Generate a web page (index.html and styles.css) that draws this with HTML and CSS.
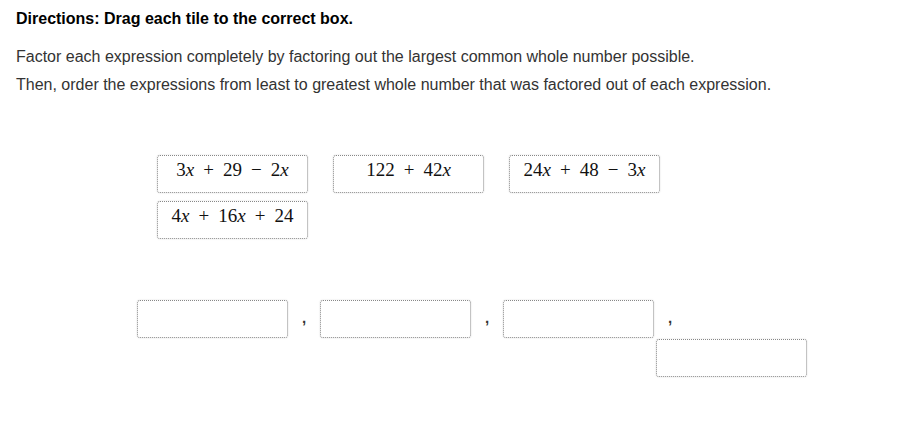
FILE: index.html
```html
<!DOCTYPE html>
<html>
<head>
<meta charset="utf-8">
<link rel="stylesheet" href="styles.css">
</head>
<body>
<div class="page">
  <p class="directions">Directions: Drag each tile to the correct box.</p>
  <p class="prompt">Factor each expression completely by factoring out the largest common whole number possible.<br>Then, order the expressions from least to greatest whole number that was factored out of each expression.</p>

  <div class="tiles">
    <div class="tile"><span class="math">3<i>x</i><span class="op">+</span>29<span class="op">−</span>2<i>x</i></span></div>
    <div class="tile"><span class="math">122<span class="op">+</span>42<i>x</i></span></div>
    <div class="tile"><span class="math">24<i>x</i><span class="op">+</span>48<span class="op">−</span>3<i>x</i></span></div>
    <div class="tile"><span class="math">4<i>x</i><span class="op">+</span>16<i>x</i><span class="op">+</span>24</span></div>
  </div>

  <div class="drops">
    <div class="drop-row">
      <div class="drop"></div><span class="comma">,</span>
      <div class="drop"></div><span class="comma">,</span>
      <div class="drop"></div><span class="comma">,</span>
    </div>
    <div class="drop-row second">
      <div class="drop"></div>
    </div>
  </div>
</div>
</body>
</html>
```
FILE: styles.css
```css
html, body {
  margin: 0;
  padding: 0;
  background: #ffffff;
}

.page {
  padding: 9px 16px;
  font-family: "Liberation Sans", Arial, sans-serif;
  color: #222;
}

.directions {
  margin: 0;
  font-size: 16px;
  line-height: 20px;
  font-weight: bold;
  color: #000;
}

.prompt {
  margin: 14px 0 0 0;
  font-size: 16px;
  line-height: 28px;
  color: #333;
}

.tiles {
  margin: 56px 0 0 141px;
  width: 503px;
  display: flex;
  flex-wrap: wrap;
  column-gap: 25px;
  row-gap: 8px;
}

.tile {
  box-sizing: border-box;
  width: 151px;
  height: 38px;
  padding-top: 3px;
  background: #fff;
  border: 1px dotted #888;
  border-radius: 3px;
  box-shadow: 0 0 2px #ddd;
  text-align: center;
  line-height: 22px;
}

.math {
  font-family: "Liberation Serif", "Times New Roman", serif;
  font-size: 19px;
  color: #111;
}

.math i {
  font-style: italic;
}

.op {
  margin: 0 9px;
}

.drops {
  margin: 61px 0 0 121px;
}

.drop-row {
  display: flex;
  align-items: center;
}

.drop-row.second {
  margin-left: 519px;
  margin-top: 1px;
}

.drop {
  box-sizing: border-box;
  width: 151px;
  height: 38px;
  background: #fff;
  border: 1px dotted #888;
  border-radius: 3px;
  box-shadow: 0 0 2px #ddd;
}

.comma {
  width: 32px;
  text-align: center;
  font-size: 15px;
  font-weight: bold;
  color: #333;
  margin-top: -4px;
}
```
